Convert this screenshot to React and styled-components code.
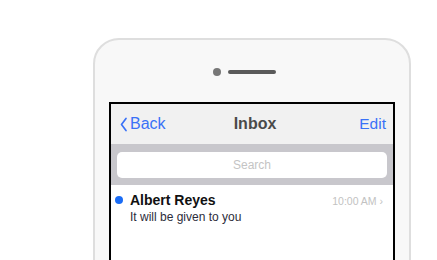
import React from 'react'
import styled, { createGlobalStyle } from 'styled-components'

const GlobalStyle = createGlobalStyle`
  html, body {
    margin: 0;
    padding: 0;
    background: #ffffff;
    overflow: hidden;
  }
  body {
    font-family: "Liberation Sans", Arial, sans-serif;
  }
`

const Page = styled.div`
  width: 437px;
  height: 260px;
  overflow: hidden;
  padding: 38px 0 0 93px;
  box-sizing: border-box;
`

const Phone = styled.div`
  width: 318px;
  height: 520px;
  box-sizing: border-box;
  border: 2px solid #dedede;
  border-radius: 26px;
  background: #f8f8f8;
  padding: 30px 14px 0;
  display: flex;
  flex-direction: column;
  align-items: center;
`

const Speaker = styled.div`
  position: relative;
  width: 48px;
  height: 4px;
  border-radius: 2px;
  background: #5a5a5a;
  &::before {
    content: '';
    position: absolute;
    left: -15px;
    top: -2px;
    width: 8px;
    height: 8px;
    border-radius: 50%;
    background: #777777;
  }
`

const Screen = styled.div`
  margin-top: 28px;
  width: 286px;
  flex: 1;
  box-sizing: border-box;
  border: 2px solid #000000;
  background: #ffffff;
  display: flex;
  flex-direction: column;
`

const NavBar = styled.div`
  height: 40px;
  background: #f1f1f1;
  display: grid;
  grid-template-columns: 1fr auto 1fr;
  align-items: center;
  padding: 0 7px 0 9px;
  font-size: 16px;
`

const NavButton = styled.div`
  display: flex;
  align-items: center;
  gap: 2px;
  color: #3a72f7;
  font-size: ${p => (p.$right ? '15.5px' : '16px')};
  justify-self: ${p => (p.$right ? 'end' : 'start')};
`

const Title = styled.div`
  color: #4a4a4a;
  font-weight: 700;
  font-size: 16px;
  margin-left: 4px;
`

const SearchArea = styled.div`
  height: 41px;
  box-sizing: border-box;
  background: #c8c7cc;
  padding: 8px 6px 7px;
`

const SearchField = styled.div`
  height: 26px;
  border-radius: 5px;
  background: #ffffff;
  display: flex;
  align-items: center;
  justify-content: center;
  color: #c4c4c4;
  font-size: 12px;
`

const MessageRow = styled.div`
  display: flex;
  padding: 7px 10px 0 4px;
  gap: 7px;
`

const UnreadDot = styled.div`
  width: 8px;
  height: 8px;
  border-radius: 50%;
  background: #1a6cf5;
  margin-top: 4px;
  flex-shrink: 0;
`

const MessageBody = styled.div`
  flex: 1;
  display: flex;
  flex-direction: column;
  gap: 2px;
`

const MessageHead = styled.div`
  display: flex;
  justify-content: space-between;
  align-items: baseline;
`

const Sender = styled.div`
  font-weight: 700;
  font-size: 14px;
  line-height: 16px;
  color: #111111;
`

const Time = styled.div`
  font-size: 10.5px;
  color: #c2c2c2;
`

const Preview = styled.div`
  font-size: 12px;
  line-height: 15px;
  color: #2c2c3a;
`

function Chevron() {
  return (
    <svg width="8" height="15" viewBox="0 0 8 15">
      <polyline points="6,1.5 1.5,7.5 6,13.5" fill="none" stroke="#3a72f7" strokeWidth="1.7" strokeLinecap="round" strokeLinejoin="round" />
    </svg>
  )
}

export default function App() {
  return (
    <Page>
      <GlobalStyle />
      <Phone>
        <Speaker />
        <Screen>
          <NavBar>
            <NavButton>
              <Chevron />
              Back
            </NavButton>
            <Title>Inbox</Title>
            <NavButton $right>Edit</NavButton>
          </NavBar>
          <SearchArea>
            <SearchField>Search</SearchField>
          </SearchArea>
          <MessageRow>
            <UnreadDot />
            <MessageBody>
              <MessageHead>
                <Sender>Albert Reyes</Sender>
                <Time>10:00 AM ›</Time>
              </MessageHead>
              <Preview>It will be given to you</Preview>
            </MessageBody>
          </MessageRow>
        </Screen>
      </Phone>
    </Page>
  )
}
